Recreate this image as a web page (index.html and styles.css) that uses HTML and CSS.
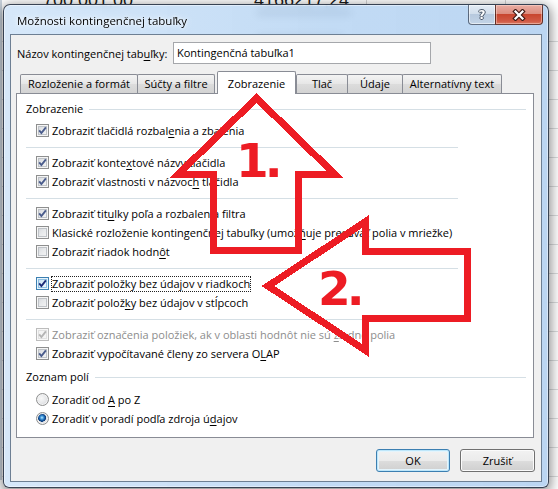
FILE: index.html
```html
<!DOCTYPE html>
<html lang="sk">
<head>
<meta charset="utf-8">
<title>Možnosti kontingenčnej tabuľky</title>
<link rel="stylesheet" href="styles.css">
</head>
<body>
<div class="sheet">
  <div class="srow r1"><span class="c1">700 001,00</span><span class="c2">4166217,24</span></div>
  <div class="smudges s1"><i class="smudge w1"></i></div>
  <div class="smudges s2"><i class="smudge w2"></i></div>
</div>

<div class="window">
  <div class="titlebar">
    <span class="title">Možnosti kontingenčnej tabuľky</span>
    <div class="capbtns">
      <div class="cap-help"><span class="q">?</span></div>
      <div class="cap-close">
        <svg width="14" height="12" viewBox="0 0 14 12"><path class="xo" d="M3.5 2.5 L10.5 9.5 M10.5 2.5 L3.5 9.5"/><path class="xi" d="M3.5 2.5 L10.5 9.5 M10.5 2.5 L3.5 9.5"/></svg>
      </div>
    </div>
  </div>

  <div class="client">
    <div class="namerow">
      <span class="namelabel">Názov kontingenčnej tab<u>u</u>ľky:</span>
      <div class="nameinput">Kontingenčná tabuľka1</div>
    </div>

    <div class="tabs">
      <div class="tab t1">Rozloženie a formát</div>
      <div class="tab t2">Súčty a filtre</div>
      <div class="tab active t3">Zobrazenie</div>
      <div class="tab t4">Tlač</div>
      <div class="tab t5">Údaje</div>
      <div class="tab t6">Alternatívny text</div>
    </div>

    <div class="panel">
      <div class="group"><span>Zobrazenie</span><i class="gline"></i></div>
      <div class="item first"><span class="chk on"><svg viewBox="0 0 11 11"><path d="M2.2 5.4 L4.4 8 L8.9 2.4"/></svg></span><span class="lbl">Zobraziť tlačidlá rozbal<u>e</u>nia a zbalenia</span></div>
      <div class="sep"></div>
      <div class="item"><span class="chk on"><svg viewBox="0 0 11 11"><path d="M2.2 5.4 L4.4 8 L8.9 2.4"/></svg></span><span class="lbl">Zobraziť konte<u>x</u>tové názvy tlačidla</span></div>
      <div class="item"><span class="chk on"><svg viewBox="0 0 11 11"><path d="M2.2 5.4 L4.4 8 L8.9 2.4"/></svg></span><span class="lbl">Zobraziť vlastnosti v názvoc<u>h</u> tlačidla</span></div>
      <div class="sep"></div>
      <div class="item"><span class="chk on"><svg viewBox="0 0 11 11"><path d="M2.2 5.4 L4.4 8 L8.9 2.4"/></svg></span><span class="lbl">Zobraziť tit<u>u</u>lky poľa a rozbalenia filtra</span></div>
      <div class="item"><span class="chk"></span><span class="lbl">Klasické rozloženie kontingenčnej tabuľky (umož<u>ň</u>uje presúvať polia v mriežke)</span></div>
      <div class="item"><span class="chk"></span><span class="lbl">Zobraziť riadok hodn<u>ô</u>t</span></div>
      <div class="sep"></div>
      <div class="item"><span class="chk on focus"><svg viewBox="0 0 11 11"><path d="M2.2 5.4 L4.4 8 L8.9 2.4"/></svg></span><span class="lbl focused">Zobraziť položky bez úda<u>j</u>ov v riadkoch</span></div>
      <div class="item"><span class="chk"></span><span class="lbl">Zobraziť polož<u>k</u>y bez údajov v stĺpcoch</span></div>
      <div class="sep"></div>
      <div class="item disabled"><span class="chk on"><svg viewBox="0 0 11 11"><path d="M2.2 5.4 L4.4 8 L8.9 2.4"/></svg></span><span class="lbl">Zobraziť označenia položiek, ak v oblasti hodnôt nie sú <u>ž</u>iadne polia</span></div>
      <div class="item"><span class="chk on"><svg viewBox="0 0 11 11"><path d="M2.2 5.4 L4.4 8 L8.9 2.4"/></svg></span><span class="lbl">Zobraziť vypočítavané členy zo servera O<u>L</u>AP</span></div>
      <div class="group second"><span>Zoznam polí</span><i class="gline"></i></div>
      <div class="item first-radio"><span class="rad"></span><span class="lbl">Zoradiť od <u>A</u> po Z</span></div>
      <div class="item"><span class="rad on"></span><span class="lbl">Zoradiť v poradí podľa zdroja ú<u>d</u>ajov</span></div>
    </div>

    <div class="btnrow">
      <div class="btn default">OK</div>
      <div class="btn">Zrušiť</div>
    </div>
  </div>
</div>

<svg class="annot" width="558" height="489" viewBox="0 0 558 489">
  <path d="M256.5 98 L335 174.5 L298.5 174.5 L298.5 250.5 L213 250.5 L213 174.5 L178 174.5 Z"/>
  <path d="M268 286 L365 222 L365 251 L467 251 L467 318.5 L365 318.5 L365 350 Z"/>
  <text x="236" y="177">1.</text>
  <text x="318" y="305">2.</text>
</svg>
</body>
</html>
```
FILE: styles.css
```css
* { box-sizing: border-box; }

html, body {
  margin: 0;
  padding: 0;
}

body {
  width: 558px;
  height: 489px;
  overflow: hidden;
  position: relative;
  background: #fff;
  font-family: "Open Sans", "Segoe UI", "Noto Sans", sans-serif;
  font-size: 11px;
  color: #000;
}

/* spreadsheet behind the dialog */
.sheet {
  height: 489px;
  background-color: #fff;
  background-image:
    linear-gradient(to right, transparent 366px, #d4d4d4 366px, #d4d4d4 367px, transparent 367px),
    linear-gradient(to right, transparent 505px, #d4d4d4 505px, #d4d4d4 506px, transparent 506px),
    linear-gradient(to right, #c8d2dc 0, #c8d2dc 2px, transparent 2px),
    repeating-linear-gradient(to bottom, transparent 0, transparent 28px, #dadcdd 28px, #dadcdd 29px);
  background-position: 0 0, 0 0, 0 0, 0 22px;
}

.srow {
  display: flex;
  height: 18px;
  line-height: 18px;
  font-family: "Liberation Sans", Arial, sans-serif;
  font-size: 18px;
  color: #1c1c1c;
  white-space: nowrap;
}

.r1 { margin-top: -9px; }

.c1 {
  width: 211px;
  margin-left: 43px;
}

.smudges {
  display: flex;
  padding-left: 256px;
}

.s1 { margin-top: 1px; }
.s2 { margin-top: 19px; }

.smudge {
  display: block;
  height: 6px;
  border-radius: 3px;
  background: rgba(40, 40, 50, 0.55);
  filter: blur(2.5px);
}

.w1 { width: 96px; }
.w2 { width: 88px; }

/* window */
.window {
  position: absolute;
  left: 3px;
  top: 4px;
  width: 546px;
  height: 484px;
  display: flex;
  flex-direction: column;
  padding: 0 6px 5px 6px;
  border: 1px solid rgba(30, 40, 55, 0.85);
  border-radius: 7px 7px 6px 6px;
  background: linear-gradient(to right, rgba(206, 227, 248, 0.84), rgba(184, 213, 243, 0.86) 60%, rgba(178, 208, 240, 0.88));
  backdrop-filter: blur(3px);
  box-shadow: 0 3px 12px 2px rgba(0, 0, 0, 0.45), inset 0 0 0 1px rgba(255, 255, 255, 0.45);
}

.titlebar {
  height: 29px;
  flex: none;
  display: flex;
  justify-content: space-between;
  align-items: flex-start;
  padding-left: 7px;
}

.title {
  margin-top: 8px;
  font-size: 11.5px;
  line-height: 16px;
  color: #000;
  text-shadow: 0 0 6px #fff, 0 0 3px rgba(255, 255, 255, 0.9);
}

.capbtns {
  display: flex;
  height: 20px;
  margin-right: -1px;
}

.cap-help {
  width: 27px;
  height: 20px;
  border: 1px solid rgba(55, 68, 90, 0.75);
  border-top: none;
  border-right: none;
  border-radius: 0 0 0 4px;
  background: linear-gradient(#e4ecf5 0%, #d2deec 45%, #b7c9de 50%, #c3d4e7 100%);
  box-shadow: inset 0 0 0 1px rgba(255, 255, 255, 0.55);
  display: flex;
  justify-content: center;
  align-items: center;
}

.q {
  font-family: "DejaVu Sans", sans-serif;
  font-weight: bold;
  font-size: 12px;
  line-height: 12px;
  color: #fff;
  text-shadow: 1px 0 #4a5668, -1px 0 #4a5668, 0 1px #4a5668, 0 -1px #4a5668;
}

.cap-close {
  width: 48px;
  height: 20px;
  border: 1px solid rgba(70, 30, 25, 0.8);
  border-top: none;
  border-radius: 0 0 4px 0;
  background: linear-gradient(#e9ada3 0%, #dc8e80 45%, #c8462f 50%, #d15a45 85%, #d97a62 100%);
  box-shadow: inset 0 0 0 1px rgba(255, 225, 215, 0.45);
  display: flex;
  justify-content: center;
  align-items: center;
}

.cap-close svg { display: block; }
.xo { stroke: #3f1b16; stroke-width: 4.4; fill: none; stroke-linecap: square; }
.xi { stroke: #fff; stroke-width: 2.2; fill: none; stroke-linecap: square; }

/* client area */
.client {
  flex: 1;
  display: flex;
  flex-direction: column;
  border: 1px solid #6d7f93;
  background: #f0f0f0;
  padding: 0 7px 0 5px;
}

.namerow {
  display: flex;
  align-items: center;
  margin-top: 7px;
  height: 22px;
  padding-left: 1px;
}

.namelabel {
  width: 156px;
  white-space: nowrap;
}

.nameinput {
  width: 258px;
  height: 22px;
  border: 1px solid #a5a7ab;
  background: #fff;
  padding-left: 3px;
  line-height: 20px;
}

u {
  text-decoration: underline;
  text-decoration-thickness: 1px;
  text-underline-offset: 2px;
}

/* tabs */
.tabs {
  display: flex;
  align-items: flex-end;
  margin-top: 7px;
  height: 22px;
  padding-left: 4px;
  position: relative;
  z-index: 2;
}

.tab {
  height: 19px;
  border: 1px solid #898c95;
  border-bottom: none;
  border-radius: 2px 2px 0 0;
  background: linear-gradient(#f4f4f4, #e6e6e6 50%, #dcdcdc 51%, #d3d3d3);
  text-align: center;
  line-height: 17px;
  white-space: nowrap;
}

.t1 { width: 118px; }
.t2 { width: 78px; margin-left: -1px; }
.t3 { width: 79px; margin-left: 2px; }
.t4 { width: 52px; margin-left: 0; }
.t5 { width: 56px; margin-left: -1px; }
.t6 { width: 100px; margin-left: -1px; }

.tab.active {
  height: 23px;
  margin-bottom: -1px;
  background: #fff;
  padding-top: 3px;
}

/* panel */
.panel {
  height: 345px;
  flex: none;
  border: 1px solid #898c95;
  background: #fff;
  padding: 7px 7px 0 9px;
  position: relative;
  z-index: 1;
}

.group {
  display: flex;
  align-items: center;
  height: 16px;
  line-height: 16px;
}

.group.second { margin-top: 6px; }

.gline {
  flex: 1;
  height: 1px;
  margin-left: 6px;
  background: #d5dfe5;
}

.item {
  display: flex;
  align-items: center;
  height: 19px;
  padding-left: 10px;
  white-space: nowrap;
}

.item.first { margin-top: 4px; }
.item.first-radio { margin-top: 5px; }

.sep {
  width: 432px;
  height: 1px;
  background: #d5dfe5;
  margin: 7px 0 5px;
}

.chk {
  flex: none;
  width: 13px;
  height: 13px;
  border: 1px solid #8e8f8f;
  background: linear-gradient(135deg, #cfd2d7 0%, #e6e8ea 45%, #f7f7f7 100%);
  box-shadow: inset 0 0 0 1px #f5f5f5, inset 0 0 0 2px #bfc3c8;
}

.chk svg {
  display: block;
  width: 11px;
  height: 11px;
}

.chk path {
  fill: none;
  stroke: #4a5c8c;
  stroke-width: 1.9;
}

.chk.focus {
  border-color: #3c7fb1;
  box-shadow: inset 0 0 0 1px #e6f3fb, inset 0 0 0 2px #8fc0e3;
  background: linear-gradient(135deg, #b9d9f0 0%, #e0f0fa 50%, #f2f9fd 100%);
}

.chk.focus path { stroke: #1b2a78; }

.item.disabled { color: #8d8d8d; }
.item.disabled .chk {
  border-color: #bcbcbc;
  background: #f4f4f4;
  box-shadow: inset 0 0 0 1px #f7f7f7, inset 0 0 0 2px #e1e1e1;
}
.item.disabled .chk path { stroke: #b4b4b4; }

.lbl {
  margin-left: 2px;
  border: 1px solid transparent;
  line-height: 14px;
}

.lbl.focused {
  border: 1px dotted #222;
}

.rad {
  flex: none;
  width: 13px;
  height: 13px;
  border-radius: 50%;
  border: 1px solid #8e8f8f;
  background: radial-gradient(circle at 40% 40%, #f8f8f8 0, #e8e9eb 45%, #c9ccd1 100%);
  box-shadow: inset 0 0 0 1px #f3f3f3;
}

.rad.on {
  background:
    radial-gradient(circle at 45% 42%, #cbeafe 0, #5aaee6 1.2px, #1d68b3 2.6px, #0f3f7c 3.6px, #0f3f7c 3.9px, transparent 4.3px),
    radial-gradient(circle at 40% 40%, #f8f8f8 0, #e8e9eb 45%, #c9ccd1 100%);
}

/* buttons */
.btnrow {
  display: flex;
  justify-content: flex-end;
  gap: 10px;
  margin-top: 11px;
  margin-right: -1px;
}

.btn {
  width: 75px;
  height: 23px;
  border: 1px solid #707070;
  border-radius: 3px;
  background: linear-gradient(#f2f2f2 0%, #ebebeb 50%, #dddddd 51%, #cfcfcf 100%);
  box-shadow: inset 0 0 0 1px #fbfbfb;
  text-align: center;
  line-height: 21px;
}

.btn.default {
  width: 74px;
  border-color: #3c7fb1;
  box-shadow: inset 0 0 0 1px #bde6fa, inset 0 0 0 2px #e4f4fc;
}

/* red annotations */
.annot {
  position: absolute;
  left: 0;
  top: 0;
  pointer-events: none;
  z-index: 10;
}

.annot path {
  fill: none;
  stroke: #ed1c24;
  stroke-width: 7;
  stroke-linejoin: miter;
  stroke-miterlimit: 10;
  shape-rendering: crispEdges;
}

.annot text {
  fill: #ed1c24;
  font-family: "DejaVu Sans", sans-serif;
  font-weight: bold;
  font-size: 47px;
  letter-spacing: -4px;
}
```
